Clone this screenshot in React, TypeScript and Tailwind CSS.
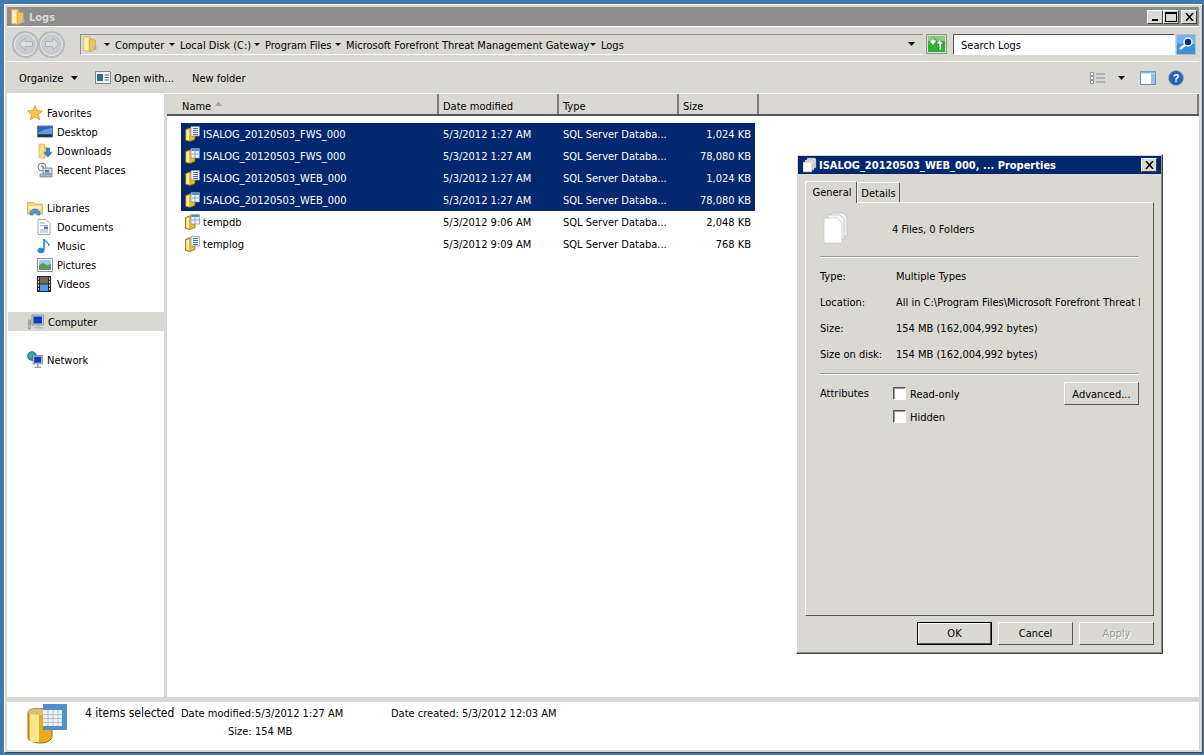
import React from 'react';

type FileRow = { name: string; date: string; size: string; selected: boolean; table: boolean };

const files: FileRow[] = [
  { name: 'ISALOG_20120503_FWS_000', date: '5/3/2012 1:27 AM', size: '1,024 KB', selected: true, table: false },
  { name: 'ISALOG_20120503_FWS_000', date: '5/3/2012 1:27 AM', size: '78,080 KB', selected: true, table: true },
  { name: 'ISALOG_20120503_WEB_000', date: '5/3/2012 1:27 AM', size: '1,024 KB', selected: true, table: false },
  { name: 'ISALOG_20120503_WEB_000', date: '5/3/2012 1:27 AM', size: '78,080 KB', selected: true, table: true },
  { name: 'tempdb', date: '5/3/2012 9:06 AM', size: '2,048 KB', selected: false, table: true },
  { name: 'templog', date: '5/3/2012 9:09 AM', size: '768 KB', selected: false, table: false },
];

const Arrow = () => (
  <svg width="8" height="4" viewBox="0 0 8 4" className="shrink-0">
    <path d="M0 0h7L3.500 4z" fill="#000" />
  </svg>
);

const SmallArrow = () => (
  <svg width="6" height="3" viewBox="0 0 6 3" className="shrink-0">
    <path d="M0 0h6L3 3z" fill="#111" />
  </svg>
);

const FolderIcon = ({ size = 16 }: { size?: number }) => (
  <svg width={size} height={size} viewBox="0 0 16 16" className="shrink-0">
    <path d="M1.500.500h6l1 1V15h-6l-1-1z" fill="#f6dc83" stroke="#d8b452" strokeWidth=".6" />
    <path d="M7.500 2.500l6 1.500v9.500l-6 2z" fill="#ecc552" stroke="#c39c38" strokeWidth=".6" />
    <path d="M12 10h2.500v3.500H12z" fill="#8fb7e2" />
    <path d="M2.500 2H6v12H2.500z" fill="#fdf0b8" />
  </svg>
);

const DbIcon = ({ table }: { table: boolean }) => (
  <svg width="15" height="16" viewBox="0 0 15 16" className="shrink-0">
    <path d="M.5 3.500L4 2h6v11.500L5 15.500l-4.500-1z" fill="#e9b92a" stroke="#7b5c16" strokeWidth=".7" />
    <path d="M1.500 4H4v10H1.500z" fill="#fdeea8" />
    <path d="M6 .5h8.500v9.500H6z" fill="#f3f6fb" stroke="#6f8fb8" strokeWidth=".7" />
    {table ? (
      <>
        <path d="M6.500 1h7.500v2H6.500z" fill="#4f8fdc" />
        <path d="M6.500 6h8M10 3v7" stroke="#7f9cc0" strokeWidth=".9" />
      </>
    ) : (
      <path d="M8 2.500h5M8 4.500h5M8 6.500h5M8 8.500h5" stroke="#3a5f94" strokeWidth=".9" />
    )}
  </svg>
);

const StarIcon = () => (
  <svg width="16" height="16" viewBox="0 0 16 16" className="shrink-0">
    <path d="M8 .5l2.200 5 5.300.4-4 3.500 1.300 5.400L8 12l-4.800 2.800 1.300-5.400-4-3.500 5.300-.4z" fill="#f4c542" stroke="#c8962a" strokeWidth=".7" />
  </svg>
);

const DesktopIcon = () => (
  <svg width="16" height="16" viewBox="0 0 16 16" className="shrink-0">
    <path d="M.5 2h15v11H.5z" fill="#2a63c4" stroke="#68747f" />
    <path d="M1 9c4-3 9-4 14-5v6H1z" fill="#5d9be6" />
    <path d="M1 10.500h14V13H1z" fill="#26303c" />
  </svg>
);

const DownloadsIcon = () => (
  <svg width="16" height="16" viewBox="0 0 16 16" className="shrink-0">
    <path d="M2 1h5l1 1v13H3l-1-1z" fill="#f5dc8a" stroke="#c9a53c" strokeWidth=".6" />
    <path d="M7 3l3 1v9l-3 2z" fill="#e6c25a" />
    <path d="M9.500 5h3v4.500H15L11 14 7 9.500h2.500z" fill="#2f7fdc" stroke="#1b5eb0" strokeWidth=".5" />
  </svg>
);

const RecentIcon = () => (
  <svg width="16" height="16" viewBox="0 0 16 16" className="shrink-0">
    <circle cx="5" cy="5" r="4" fill="#eef0f2" stroke="#77808a" />
    <path d="M5 2.500V5h2" stroke="#444" fill="none" strokeWidth=".8" />
    <path d="M6 6h9v6H6z" fill="#cfd6dd" stroke="#77808a" strokeWidth=".8" />
    <path d="M8 8h4v2.500H8z" fill="#3f7fd0" />
    <path d="M3 12h12v3H3z" fill="#aeb5bc" stroke="#77808a" strokeWidth=".7" />
  </svg>
);

const LibrariesIcon = () => (
  <svg width="16" height="16" viewBox="0 0 16 16" className="shrink-0">
    <path d="M.5 2.500h6l1.500 1.500h7.500v10H.5z" fill="#f3d673" stroke="#c9a53c" strokeWidth=".7" />
    <path d="M2 6h12v3H2z" fill="#fbf2cc" />
    <path d="M3 15v-3l3-3h4l3 3v3h-3v-2H6v2z" fill="#4d97e0" stroke="#24609f" strokeWidth=".5" />
  </svg>
);

const DocumentIcon = () => (
  <svg width="14" height="16" viewBox="0 0 14 16" className="shrink-0">
    <path d="M1 .5h8l4 4v11H1z" fill="#fff" stroke="#8a8f96" strokeWidth=".8" />
    <path d="M3 4h5M3 6.500h8M3 11h8M3 13h8" stroke="#80868e" strokeWidth=".7" />
    <path d="M7 7.500h4V10H7z" fill="#3f7fd0" />
  </svg>
);

const MusicIcon = () => (
  <svg width="14" height="16" viewBox="0 0 14 16" className="shrink-0">
    <path d="M7 1v10.500" stroke="#2a80d8" strokeWidth="1.500" />
    <path d="M7 1c1 3 5 3 5 7" stroke="#2a80d8" strokeWidth="1.200" fill="none" />
    <ellipse cx="4" cy="12.500" rx="3.500" ry="2.800" fill="#2f86dc" />
  </svg>
);

const PicturesIcon = () => (
  <svg width="16" height="14" viewBox="0 0 16 14" className="shrink-0">
    <path d="M.5.500h15v13H.5z" fill="#fff" stroke="#8d949b" />
    <path d="M2 2h12v5H2z" fill="#9fcbe8" />
    <path d="M2 7l4-2 4 2 4-1v6H2z" fill="#5f9a64" />
  </svg>
);

const VideosIcon = () => (
  <svg width="14" height="16" viewBox="0 0 14 16" className="shrink-0">
    <path d="M0 0h14v16H0z" fill="#26292d" />
    <path d="M3 1h8v6.500H3z" fill="#7d6a4e" />
    <path d="M3 8.500h8V15H3z" fill="#4f9ae0" />
    <path d="M1 1.500h1v2H1zM1 5h1v2H1zM1 8.500h1v2H1zM1 12h1v2H1zM12 1.500h1v2h-1zM12 5h1v2h-1zM12 8.500h1v2h-1zM12 12h1v2h-1z" fill="#dfe3e8" />
  </svg>
);

const ComputerIcon = () => (
  <svg width="16" height="16" viewBox="0 0 16 16" className="shrink-0">
    <path d="M0 6h2.500v9H0z" fill="#b6bcc2" stroke="#6d747b" strokeWidth=".5" />
    <path d="M.8 8h1v2h-1z" fill="#53c04d" />
    <path d="M4 1h11.500v10H4z" fill="#c6cbd0" stroke="#777e85" strokeWidth=".7" />
    <path d="M5.500 2.500h8.500v7H5.500z" fill="#1439b4" />
    <path d="M9 10.500h3v2H9zM6 13h9v1.500H6z" fill="#b4b9be" />
  </svg>
);

const NetworkIcon = () => (
  <svg width="16" height="18" viewBox="0 0 16 18" className="shrink-0">
    <circle cx="5" cy="5" r="4.500" fill="#2f8fd8" stroke="#1a5b98" strokeWidth=".6" />
    <path d="M2 3l3-1 1 2-2 3-2-1z" fill="#48b848" />
    <path d="M6 4.500h9.500V13H6z" fill="#c6cbd0" stroke="#777e85" strokeWidth=".7" />
    <path d="M7.200 5.700h7v6h-7z" fill="#1439b4" />
    <path d="M10 13h1.500v2.500H10zM7.500 15.500h6.500V17H7.500z" fill="#a0a6ac" />
  </svg>
);

const NavIcon = ({ dir }: { dir: 'left' | 'right' }) => (
  <div className="flex h-[27px] w-[27px] items-center justify-center rounded-full border-2 border-[#b4bac0] bg-[#c9cccc] shadow-[inset_0_0_0_1px_#e4e6e6]">
    <svg width="16" height="14" viewBox="0 0 16 14">
      <path
        d={dir === 'left' ? 'M7 1L1.500 7 7 13V9.500h7.500v-5H7z' : 'M9 1l5.500 6L9 13V9.500H1.500v-5H9z'}
        fill="#dcdede"
        stroke="#aab0b5"
      />
    </svg>
  </div>
);

const Crumb = ({ label, width }: { label: string; width: number }) => (
  <div className="flex items-center" style={{ width }}>
    <SmallArrow />
    <span className="ml-[5px] whitespace-nowrap">{label}</span>
  </div>
);

const NavItem = ({ icon, label, child, active }: { icon: React.ReactNode; label: string; child?: boolean; active?: boolean }) => (
  <div className={`flex h-[19px] items-center ${child ? 'pl-[30px]' : 'pl-[20px]'} ${active ? 'ml-[1px] bg-[#d9d8d3] pl-[19px]' : ''}`}>
    <div className="flex w-[20px] shrink-0 items-center justify-start">{icon}</div>
    <span>{label}</span>
  </div>
);

const HeaderCell = ({ label, width, pad = 4, children }: { label: string; width: number; pad?: number; children?: React.ReactNode }) => (
  <div className="flex h-full items-center border-r-2 border-r-[#7f7f7b] pt-[2px]" style={{ width, paddingLeft: pad }}>
    <span>{label}</span>
    {children}
  </div>
);

const WinButton = ({ children }: { children: React.ReactNode }) => (
  <div className="flex h-[14px] w-[16px] items-center justify-center border border-t-white border-l-white border-r-[#404040] border-b-[#404040] bg-[#d9d8d3]">
    {children}
  </div>
);

const DialogButton = ({ label, primary, disabled }: { label: string; primary?: boolean; disabled?: boolean }) => (
  <div
    className={`flex h-[23px] w-[75px] items-center justify-center border ${
      primary ? 'border-black shadow-[inset_-1px_-1px_0_#555,inset_1px_1px_0_#fff]' : 'border-t-white border-l-white border-r-[#555] border-b-[#555]'
    } ${disabled ? 'text-[#9a9a96] [text-shadow:1px_1px_0_#fff]' : 'text-black'}`}
  >
    {label}
  </div>
);

const CheckRow = ({ label }: { label: string }) => (
  <div className="flex h-[13px] items-center gap-[4px]">
    <div className="h-[13px] w-[13px] border border-t-[#555] border-l-[#555] border-r-white border-b-white bg-white shadow-[inset_1px_1px_0_#9a9a96]" />
    <span>{label}</span>
  </div>
);

const PropRow = ({ k, v }: { k: string; v: string }) => (
  <div className="-mr-[2px] flex h-[26px] items-center">
    <span className="w-[76px] shrink-0">{k}</span>
    <span className="overflow-hidden whitespace-nowrap">{v}</span>
  </div>
);

const PropertiesDialog = () => (
  <div className="absolute left-[789px] top-[60px] flex h-[500px] w-[367px] flex-col border border-t-white border-l-white border-r-[#444] border-b-[#444] bg-[#d9d8d3] p-[1px] shadow-[inset_-1px_-1px_0_#8a8a86]">
    <div className="flex h-[18px] items-center bg-[#04286f] pl-[5px] pr-[4px] font-bold text-white">
      <svg width="14" height="16" viewBox="0 0 14 16" className="mr-[2px] shrink-0">
        <path d="M4 1h8l1 1v9H4z" fill="#dfe3e6" stroke="#7b8187" strokeWidth=".5" />
        <path d="M2 3h8l1 1v9H2z" fill="#eceff1" stroke="#7b8187" strokeWidth=".5" />
        <path d="M0 5h8l1 1v9H0z" fill="#fff" stroke="#7b8187" strokeWidth=".5" />
      </svg>
      <div className="flex-1 whitespace-nowrap">ISALOG_20120503_WEB_000, ... Properties</div>
      <WinButton>
        <svg width="9" height="8" viewBox="0 0 9 8">
          <path d="M1 0l7 8M8 0L1 8" stroke="#000" strokeWidth="1.500" />
        </svg>
      </WinButton>
    </div>
    <div className="flex h-[28px] items-end pl-[7px]">
      <div className="z-10 -mb-[1px] flex h-[22px] w-[52px] items-center justify-center rounded-t-[2px] border border-b-0 border-t-white border-l-white border-r-[#555] bg-[#d9d8d3] pb-[2px] pl-[2px]">
        <span>General</span>
      </div>
      <div className="flex h-[20px] w-[43px] items-center justify-center rounded-t-[2px] border border-b-0 border-t-white border-l-white border-r-[#555]">
        <span>Details</span>
      </div>
    </div>
    <div className="mx-[7px] flex h-[414px] flex-col border border-t-white border-l-white border-r-[#555] border-b-[#555] pl-[14px] pr-[15px] pt-[9px]">
      <div className="flex h-[32px] items-center">
        <svg width="26" height="32" viewBox="0 0 26 32" className="ml-[3px] mr-[43px] shrink-0">
          <path d="M9 1h11l4 4v19H9z" fill="#f0f1f1" stroke="#b9bbbb" strokeWidth=".7" />
          <path d="M5 3h12l4 4v20H5z" fill="#f7f7f7" stroke="#b9bbbb" strokeWidth=".7" />
          <path d="M1 6h13l5 5v20H1z" fill="#fff" stroke="#c4c6c6" strokeWidth=".7" />
        </svg>
        <span>4 Files, 0 Folders</span>
      </div>
      <div className="mb-[4px] mt-[12px] h-[2px] w-[318px] border-t border-t-[#9a9a96] border-b border-b-white" />
      <PropRow k="Type:" v="Multiple Types" />
      <PropRow k="Location:" v="All in C:\Program Files\Microsoft Forefront Threat Management Gateway\Logs" />
      <PropRow k="Size:" v="154 MB (162,004,992 bytes)" />
      <PropRow k="Size on disk:" v="154 MB (162,004,992 bytes)" />
      <div className="mb-[7px] mt-[7px] h-[2px] w-[318px] border-t border-t-[#9a9a96] border-b border-b-white" />
      <div className="-mr-[1px] flex">
        <span className="mt-[4px] w-[73px] shrink-0">Attributes</span>
        <div className="mt-[5px] flex flex-col gap-[10px]">
          <CheckRow label="Read-only" />
          <CheckRow label="Hidden" />
        </div>
        <div className="ml-auto flex h-[23px] w-[75px] items-center justify-center border border-t-white border-l-white border-r-[#555] border-b-[#555]">
          <span>Advanced...</span>
        </div>
      </div>
    </div>
    <div className="mr-[7px] mt-[6px] flex justify-end gap-[6px]">
      <DialogButton label="OK" primary />
      <DialogButton label="Cancel" />
      <DialogButton label="Apply" disabled />
    </div>
  </div>
);

export default function App() {
  return (
    <div className="h-[755px] w-[1204px] overflow-hidden bg-[#4279ae] pb-[2px] pl-[4px] pr-[1px] pt-[4px] font-['DejaVu_Sans_Condensed','Liberation_Sans',sans-serif] text-[11px] leading-none text-black [&_span]:pt-[2px]">
      <div className="flex h-full flex-col border border-t-white border-l-white border-r-[#444] border-b-[#444] bg-[#d9d8d3] pb-[2px] pl-[2px] pr-[3px] pt-[2px]">
        {/* title bar */}
        <div className="flex h-[19px] shrink-0 items-center bg-[#8e8c8d] pl-[3px] pr-[2px]">
          <FolderIcon />
          <span className="ml-[3px] flex-1 font-bold text-[#d9d8d3]">Logs</span>
          <WinButton>
            <div className="mt-[7px] h-[2px] w-[6px] bg-black" />
          </WinButton>
          <WinButton>
            <div className="h-[10px] w-[12px] border border-t-2 border-black" />
          </WinButton>
          <div className="ml-[2px]">
            <WinButton>
              <svg width="9" height="8" viewBox="0 0 9 8">
                <path d="M1 0l7 8M8 0L1 8" stroke="#000" strokeWidth="1.500" />
              </svg>
            </WinButton>
          </div>
        </div>

        {/* address band */}
        <div className="flex h-[36px] shrink-0 items-center border-y border-y-white pl-[5px]">
          <NavIcon dir="left" />
          <div className="-ml-[1px]">
            <NavIcon dir="right" />
          </div>
          <div className="ml-[15px] flex h-[21px] w-[843px] items-center border-b border-l border-t border-b-white border-l-[#8e8c8d] border-t-[#8e8c8d] pl-[1px]">
            <FolderIcon />
            <div className="ml-[6px] flex items-center">
              <Crumb label="Computer" width={65} />
              <Crumb label="Local Disk (C:)" width={85} />
              <Crumb label="Program Files" width={81} />
              <Crumb label="Microsoft Forefront Threat Management Gateway" width={255} />
              <Crumb label="Logs" width={40} />
            </div>
            <div className="ml-auto mr-[7px]">
              <Arrow />
            </div>
          </div>
          <svg width="21" height="20" viewBox="0 0 21 20" className="ml-[3px] shrink-0">
            <path d="M.5.500h20v19H.5z" fill="#d9d8d3" stroke="#8f948f" />
            <path d="M2 2h17v16H2z" fill="#2fb52a" />
            <path d="M2 2h17v5H2z" fill="#8ecb7e" />
            <path d="M3.500 8L8 3.500v2.500h2.500L9 9.500H8V12z" fill="#fff" stroke="#1e5a1e" strokeWidth=".5" />
            <path d="M17.500 10L13 5.500 10.500 10H13v6h2.500v-6z" fill="#fff" stroke="#1e5a1e" strokeWidth=".5" />
          </svg>
          <div className="ml-[6px] flex h-[21px] w-[222px] items-center border border-b-white border-l-[#555] border-r-white border-t-[#555] bg-white pl-[7px]">
            <span>Search Logs</span>
          </div>
          <svg width="20" height="21" viewBox="0 0 20 21" className="ml-[1px] shrink-0">
            <path d="M.5.500h19v20H.5z" fill="#3d8fe0" stroke="#aebfd2" />
            <path d="M1 1h18v9H1z" fill="#6fb2ee" />
            <circle cx="12" cy="8" r="4" fill="#0b2f7a" stroke="#fff" strokeWidth="1.500" />
            <path d="M9 11l-5 4" stroke="#fff" strokeWidth="2.500" />
          </svg>
        </div>

        {/* command bar */}
        <div className="flex h-[32px] shrink-0 items-center border-b border-b-white pl-[12px] pr-[15px]">
          <span className="w-[52px]">Organize</span>
          <Arrow />
          <svg width="16" height="13" viewBox="0 0 16 13" className="ml-[16px] shrink-0">
            <path d="M.5.500h15v12H.5z" fill="#f2f3f4" stroke="#7f858b" />
            <path d="M2 3h6v7H2z" fill="#2c6a8e" />
            <path d="M9.500 4H14M9.500 6.500H14M9.500 9H14" stroke="#666" />
          </svg>
          <span className="ml-[3px] w-[78px]">Open with...</span>
          <span>New folder</span>
          <div className="ml-auto flex items-center">
            <svg width="16" height="12" viewBox="0 0 16 12" className="shrink-0">
              <path d="M.5.500h3v3h-3zM.5 4.500h3v3h-3zM.5 8.500h3v3h-3z" fill="#fff" stroke="#8b9298" />
              <path d="M6 2h9M6 6h9M6 10h9" stroke="#7f8a8a" />
            </svg>
            <div className="ml-[12px]">
              <Arrow />
            </div>
            <svg width="16" height="14" viewBox="0 0 16 14" className="ml-[14px] shrink-0">
              <path d="M.5.500h15v13H.5z" fill="#fff" stroke="#5d8fc4" />
              <path d="M.5.500h15v2H.5z" fill="#8fb6de" />
              <path d="M11 3h4v10h-4z" fill="#9cc0e4" />
            </svg>
            <svg width="16" height="16" viewBox="0 0 16 16" className="ml-[12px] shrink-0">
              <circle cx="8" cy="8" r="7.500" fill="#2a62b4" stroke="#98a4b2" />
              <text x="8" y="12" textAnchor="middle" fontSize="11" fontWeight="bold" fill="#fff" fontFamily="Liberation Sans">?</text>
            </svg>
          </div>
        </div>

        {/* main area */}
        <div className="relative flex min-h-0 flex-1">
          <aside className="w-[157px] shrink-0 bg-white pt-[9px]">
            <NavItem icon={<StarIcon />} label="Favorites" />
            <NavItem icon={<DesktopIcon />} label="Desktop" child />
            <NavItem icon={<DownloadsIcon />} label="Downloads" child />
            <NavItem icon={<RecentIcon />} label="Recent Places" child />
            <div className="h-[19px]" />
            <NavItem icon={<LibrariesIcon />} label="Libraries" />
            <NavItem icon={<DocumentIcon />} label="Documents" child />
            <NavItem icon={<MusicIcon />} label="Music" child />
            <NavItem icon={<PicturesIcon />} label="Pictures" child />
            <NavItem icon={<VideosIcon />} label="Videos" child />
            <div className="h-[19px]" />
            <NavItem icon={<ComputerIcon />} label="Computer" active />
            <div className="h-[19px]" />
            <NavItem icon={<NetworkIcon />} label="Network" />
          </aside>
          <div className="w-[3px] shrink-0" />
          <main className="flex min-w-0 flex-1 flex-col bg-white">
            <div className="flex h-[22px] shrink-0 border-b-2 border-b-[#555] bg-[#d9d8d3]">
              <HeaderCell label="Name" width={272} pad={15}>
                <svg width="7" height="4" viewBox="0 0 7 4" className="ml-[4px] mb-[2px]">
                  <path d="M3.500 0L7 4H0z" fill="#a4a6a6" />
                </svg>
              </HeaderCell>
              <HeaderCell label="Date modified" width={120} />
              <HeaderCell label="Type" width={120} />
              <HeaderCell label="Size" width={80} />
              <div className="flex-1 border-r-2 border-r-[#7f7f7b]" />
            </div>
            <div className="ml-[14px] mt-[7px] w-[574px]">
              {files.map((f, i) => (
                <div key={i} className={`flex h-[22px] items-center pb-[1px] ${f.selected ? 'bg-[#04286f] text-white' : ''}`}>
                  <div className="ml-[4px] w-[18px] shrink-0">
                    <DbIcon table={f.table} />
                  </div>
                  <span className="w-[240px] shrink-0 whitespace-nowrap">{f.name}</span>
                  <span className="w-[120px] shrink-0">{f.date}</span>
                  <span className="w-[105px] shrink-0 whitespace-nowrap">SQL Server Databa...</span>
                  <span className="flex-1 whitespace-nowrap pr-[4px] text-right">{f.size}</span>
                </div>
              ))}
            </div>
          </main>
          <PropertiesDialog />
        </div>

        {/* status bar */}
        <div className="flex h-[53px] shrink-0 border-t-[5px] border-t-[#d9d8d3] bg-white">
          <svg width="42" height="42" viewBox="0 0 42 42" className="ml-[19px] mt-[1px] shrink-0">
            <path d="M2 9c0-2 4-3.500 10-3.500s14 1 14 3.500v24c0 4-5 7-11 7S2 38 2 35z" fill="#e6ae18" stroke="#8a6a20" />
            <path d="M4 10h9v29H4z" fill="#fbe58f" />
            <path d="M2 9c0-2 4-3.500 10-3.500s14 1 14 3.500c0 2-6 3-12 3S2 11 2 9z" fill="#d8c07a" />
            <path d="M17 1h24v26H17z" fill="#4f8fd0" />
            <path d="M17 7h19v16H17z" fill="#eef1f6" />
            <path d="M17 11.500h19M17 15.500h19M17 19.500h19M22 7v16M27 7v16M32 7v16" stroke="#b4c0d2" />
          </svg>
          <div className="ml-[17px] mt-[3px] flex flex-col">
            <div className="flex items-center">
              <span className="w-[96px] whitespace-nowrap text-[12px]">4 items selected</span>
              <span className="w-[74px] whitespace-nowrap">Date modified:</span>
              <span className="w-[136px] whitespace-nowrap">5/3/2012 1:27 AM</span>
              <span className="w-[71px] whitespace-nowrap">Date created:</span>
              <span className="whitespace-nowrap">5/3/2012 12:03 AM</span>
            </div>
            <div className="ml-[143px] mt-[5px] flex">
              <span className="w-[27px]">Size:</span>
              <span>154 MB</span>
            </div>
          </div>
        </div>
      </div>
    </div>
  );
}
